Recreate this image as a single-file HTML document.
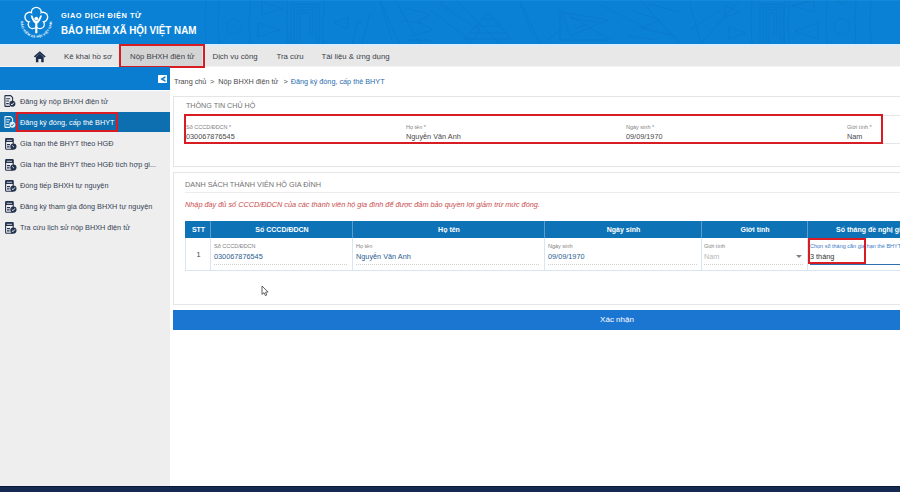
<!DOCTYPE html>
<html><head><meta charset="utf-8">
<style>
*{box-sizing:border-box;margin:0;padding:0}
html,body{width:900px;height:492px;overflow:hidden;background:#fff;font-family:"Liberation Sans",sans-serif;position:relative}
.abs{position:absolute}
#hdr{left:0;top:0;width:900px;height:44px;background:#0a81d5;overflow:hidden}
#nav{left:0;top:44px;width:900px;height:23px;background:#e8e8e8;border-top:2px solid #d8ecfa;border-bottom:1px solid #f4f4f4}
.nv{position:absolute;top:0;height:21px;line-height:21px;font-size:7.8px;color:#3a3f48;white-space:nowrap}
#side{left:0;top:67px;width:170px;height:419px;background:#eeeeee}
#sidehd{left:0;top:67px;width:170px;height:24px;background:#0a7dd0;border-bottom:1px solid #fafcff}
.si{position:absolute;left:0;width:170px;height:20px;font-size:7.3px;color:#354254;white-space:nowrap}
.si span{position:absolute;left:20px;top:0.7px;line-height:20px}
.si svg{position:absolute;left:4.6px;top:4.7px}
.red{position:absolute;border:2px solid #d71c24}
#foot{left:0;top:486px;width:900px;height:6px;background:#142a50;border-top:1px solid #0a1a36}
.panel{position:absolute;left:173px;width:740px;border:1px solid #e5e5e5;background:#fff}
.ptitle{position:absolute;font-size:7.15px;color:#727272;white-space:nowrap}
.lbl{position:absolute;font-size:5.5px;color:#828282;white-space:nowrap}
.val{position:absolute;font-size:7.3px;color:#4a4a4a;white-space:nowrap}
.th{position:absolute;top:221px;height:17px;line-height:17px;padding-left:1px;background:#0e73b6;color:#fff;font-weight:bold;font-size:7px;text-align:center;white-space:nowrap;border-left:1px solid #5b9ccc}
.dot{position:absolute;height:1px;background-image:linear-gradient(to right,#cfcfcf 50%,transparent 50%);background-size:2px 1px}
.td{position:absolute;top:238px;height:33px;border-left:1px solid #d9e6f1;border-bottom:1px solid #d9e6f1}
</style></head><body>
<div id="hdr" class="abs">
<svg class="abs" style="left:0;top:0" width="900" height="44" viewBox="0 0 900 44"><g stroke="#0a6fbd" stroke-width="0.7" fill="none" opacity="0.45">
<path d="M206 0 Q204 22 206 44 M219.5 0 Q217 22 219 44 M250.6 0 Q248 22 250 44 M287.5 0 Q286 22 288 44 M324.5 0 Q322 22 323 44"/>
<circle cx="234" cy="26.3" r="7.4"/>
<path d="M262 2 L282 8.5 L262 14.6 Z M258 23 L280 30 L258 37 Z M348 17.5 L334 23 L348 29 Z"/>
<path d="M291 44 V4 H319 V44 M294 44 V7 H316 V41 M297 44 V10 H313 V38 M300 44 V13 H310 V35 "/>
<path d="M352 44 L358 20 L362 22 M362 44 L370 14 M380 0 L400 44 M395 0 L420 44 M430 10 L470 40 M440 5 L480 30 L470 44 M455 0 L500 44 M520 0 L540 44 M560 10 L610 40 L560 40 Z M600 5 L650 30 M640 0 L680 44 M690 30 L720 10 M700 44 L740 0"/>
<path d="M725 6 L740 11.5 L725 17.5 Z M729 27 L746 33 L729 39 Z"/>
<path d="M760 44 V4 H783 V44 M763 44 V7 H780 V41 M766 44 V10 H777 V38 M769 44 V13 H774 V35 "/>
<path d="M752 0 Q750 22 752 44 M785 0 Q783 22 785 44 M789 0 Q787 22 789 44 M827 0 Q825 22 827 44 M856 0 Q854 22 856 44 M871 0 Q869 22 871 44"/>
<path d="M814 0 L791 6 L814 12 Z M818 23 L795 31 L818 39 Z"/>
<circle cx="841.7" cy="26.3" r="7.8"/>
<circle cx="841.7" cy="0" r="4"/>
<path d="M405 8 L430 14 L418 22 L433 30 L410 36 M402 20 L425 24 M408 40 L430 40 M464 39 L488 12 L511 39 Z M470 33 L505 33 M476 26 L499 26 M482 19 L494 19 M562 12 L608 20 L570 36 Z M570 18 L596 22 M575 28 L590 24 M630 10 L660 20 L640 28 L676 36 M628 36 L655 40 M650 4 L678 12 M380 2 L392 40 M520 4 L534 38 M690 4 L700 40 M440 2 L452 10 M545 42 L560 30"/>
</g></svg>
<svg class="abs" style="left:0;top:0" width="60" height="44" viewBox="0 0 60 44"><circle cx="36.30" cy="12.30" r="5.6" fill="#fff"/><circle cx="42.86" cy="17.07" r="5.5" fill="#fff"/><circle cx="40.00" cy="24.30" r="5.0" fill="#fff"/><circle cx="32.60" cy="24.30" r="5.0" fill="#fff"/><circle cx="29.74" cy="17.07" r="5.5" fill="#fff"/><circle cx="36.3" cy="19.2" r="6" fill="#fff"/><circle cx="36.30" cy="12.30" r="4.25" fill="#0a81d5"/><circle cx="42.86" cy="17.07" r="4.15" fill="#0a81d5"/><circle cx="40.00" cy="24.30" r="3.65" fill="#0a81d5"/><circle cx="32.60" cy="24.30" r="3.65" fill="#0a81d5"/><circle cx="29.74" cy="17.07" r="4.15" fill="#0a81d5"/><circle cx="36.3" cy="19.2" r="6.2" fill="#0a81d5"/><path d="M30.6 15.6 L32.4 15.4 Q34 20 36.3 21 Q38.6 20 40.2 15.4 L42 15.6 Q40.5 21.5 37.4 23.6 V33.2 H35.2 V23.6 Q32.1 21.5 30.6 15.6Z" fill="#fff"/><circle cx="36.3" cy="18.6" r="1.9" fill="#fff"/><path id="arc" d="M20.70 22.2 A15.6 15.6 0 0 0 51.90 22.2" fill="none"/><text font-family="Liberation Sans" font-weight="bold" font-size="3.3" fill="#fff" letter-spacing="0.2"><textPath href="#arc" startOffset="50%" text-anchor="middle">BẢO HIỂM XÃ HỘI VIỆT NAM</textPath></text></svg>
<div class="abs" style="left:61px;top:11.4px;font-size:7.4px;font-weight:bold;color:#fff;letter-spacing:0.55px;white-space:nowrap">GIAO DỊCH ĐIỆN TỬ</div>
<div class="abs" style="left:61px;top:23.6px;font-size:11.3px;font-weight:bold;color:#fff;white-space:nowrap;transform:scaleX(0.87);transform-origin:0 0">BẢO HIỂM XÃ HỘI VIỆT NAM</div>
</div>
<div class="abs" style="left:0;top:0;width:900px;height:1px;background:#1489d9"></div>
<div id="nav" class="abs">
  <svg class="abs" style="left:34px;top:4.7px" width="12" height="12" viewBox="0 0 12 12"><path d="M5.8 0.2 L-0.1 5.4 L1.1 6.5 L5.8 2.4 L10.5 6.5 L11.7 5.4 Z" fill="#1d2d4c"/><path d="M1.9 5.9 L5.8 2.6 L9.7 5.9 V11.3 H7.2 V8 H4.4 V11.3 H1.9 Z" fill="#1d2d4c"/></svg>
  <div class="nv" style="left:64px;top:-0.5px">Kê khai hồ sơ</div>
  <div class="abs" style="left:121px;top:0px;width:81px;height:20px;background:#d4d4d4"></div>
  <div class="nv" style="left:130px;top:-0.5px">Nộp BHXH điện tử</div>
  <div class="nv" style="left:212.5px;top:-0.5px">Dịch vụ công</div>
  <div class="nv" style="left:276.5px;top:-0.5px">Tra cứu</div>
  <div class="nv" style="left:321.5px;top:-0.5px">Tài liệu &amp; ứng dụng</div>
</div>
<div class="red" style="left:119px;top:44px;width:86px;height:24px"></div>

<div id="side" class="abs"></div>
<div id="sidehd" class="abs"><svg class="abs" style="left:158px;top:8px" width="9" height="8" viewBox="0 0 9 8"><rect width="9" height="8" rx="0.6" fill="#fff"/><path d="M7.4 0.9 L2.3 4 L7.4 7.1 V5.1 L5.1 4 L7.4 2.9 Z" fill="#0a7dd0"/></svg></div>
<div class="si" style="top:91px"><svg style="left:4.1px;top:4.3px" width="12" height="12" viewBox="0 0 12 12"><path d="M0.9 0.6 H6.6 L8.6 2.6 V6.4 M6 11.4 H0.9 Z M0.9 0.6 V11.4" fill="none" stroke="#24324f" stroke-width="1.1"/><path d="M2.2 3.8 H6.2 M2.2 6 H5.2 M2.2 8.6 H4.8" stroke="#24324f" stroke-width="1.1"/><circle cx="8.4" cy="8.7" r="3" fill="#24324f"/><path d="M6.9 8.8 L8 9.9 L9.9 7.6" fill="none" stroke="#eee" stroke-width="1"/></svg><span>Đăng ký nộp BHXH điện tử</span></div>
<div class="si" style="top:112px;background:#0e6fb0;color:#fff"><svg style="left:4.1px;top:4.3px" width="12" height="12" viewBox="0 0 12 12"><path d="M0.9 0.6 H6.6 L8.6 2.6 V6.4 M6 11.4 H0.9 Z M0.9 0.6 V11.4" fill="none" stroke="#e8f0f8" stroke-width="1.1"/><path d="M2.2 3.8 H6.2 M2.2 6 H5.2 M2.2 8.6 H4.8" stroke="#e8f0f8" stroke-width="1.1"/><circle cx="8.4" cy="8.7" r="3" fill="#e8f0f8"/><path d="M6.9 8.8 L8 9.9 L9.9 7.6" fill="none" stroke="#0e6fb0" stroke-width="1"/></svg><span>Đăng ký đóng, cấp thẻ BHYT</span></div>
<div class="si" style="top:133px"><svg width="12" height="12" viewBox="0 0 12 12"><rect x="0.6" y="0.6" width="7.6" height="10.6" rx="0.8" fill="none" stroke="#24324f" stroke-width="1.1"/><rect x="0.6" y="0.6" width="7.6" height="3.4" fill="#24324f"/><path d="M1.8 2.3 H7" stroke="#eee" stroke-width="0.8"/><path d="M2 6.6 H5 M2 8.9 H4.6" stroke="#24324f" stroke-width="1.1"/><circle cx="8.4" cy="8.5" r="3.1" fill="#24324f"/><path d="M7.2 7.4 L9 9.2" stroke="#eee" stroke-width="0.9"/></svg><span>Gia hạn thẻ BHYT theo HGĐ</span></div>
<div class="si" style="top:154px"><svg width="12" height="12" viewBox="0 0 12 12"><rect x="0.6" y="0.6" width="7.6" height="10.6" rx="0.8" fill="none" stroke="#24324f" stroke-width="1.1"/><rect x="0.6" y="0.6" width="7.6" height="3.4" fill="#24324f"/><path d="M1.8 2.3 H7" stroke="#eee" stroke-width="0.8"/><path d="M2 6.6 H5 M2 8.9 H4.6" stroke="#24324f" stroke-width="1.1"/><circle cx="8.4" cy="8.5" r="3.1" fill="#24324f"/><path d="M7.2 7.4 L9 9.2" stroke="#eee" stroke-width="0.9"/></svg><span>Gia hạn thẻ BHYT theo HGĐ tích hợp gi...</span></div>
<div class="si" style="top:175px"><svg width="12" height="12" viewBox="0 0 12 12"><rect x="0.6" y="0.6" width="7.6" height="10.6" rx="0.8" fill="none" stroke="#24324f" stroke-width="1.1"/><rect x="0.6" y="0.6" width="7.6" height="3.4" fill="#24324f"/><path d="M1.8 2.3 H7" stroke="#eee" stroke-width="0.8"/><path d="M2 6.6 H5 M2 8.9 H4.6" stroke="#24324f" stroke-width="1.1"/><circle cx="8.4" cy="8.5" r="3.1" fill="#24324f"/><path d="M6.9 8.6 L8 9.7 L9.9 7.4" fill="none" stroke="#eee" stroke-width="1"/></svg><span>Đóng tiếp BHXH tự nguyện</span></div>
<div class="si" style="top:196px"><svg width="12" height="12" viewBox="0 0 12 12"><rect x="0.6" y="0.6" width="7.6" height="10.6" rx="0.8" fill="none" stroke="#24324f" stroke-width="1.1"/><rect x="0.6" y="0.6" width="7.6" height="3.4" fill="#24324f"/><path d="M1.8 2.3 H7" stroke="#eee" stroke-width="0.8"/><path d="M2 6.6 H5 M2 8.9 H4.6" stroke="#24324f" stroke-width="1.1"/><circle cx="8.4" cy="8.5" r="3.1" fill="#24324f"/><path d="M6.9 8.6 L8 9.7 L9.9 7.4" fill="none" stroke="#eee" stroke-width="1"/></svg><span>Đăng ký tham gia đóng BHXH tự nguyện</span></div>
<div class="si" style="top:217px"><svg width="12" height="12" viewBox="0 0 12 12"><rect x="0.6" y="0.6" width="7.6" height="10.6" rx="0.8" fill="none" stroke="#24324f" stroke-width="1.1"/><rect x="0.6" y="0.6" width="7.6" height="3.4" fill="#24324f"/><path d="M1.8 2.3 H7" stroke="#eee" stroke-width="0.8"/><path d="M2 6.6 H5 M2 8.9 H4.6" stroke="#24324f" stroke-width="1.1"/><circle cx="8.4" cy="8.5" r="3.1" fill="#24324f"/><path d="M6.9 8.6 L8 9.7 L9.9 7.4" fill="none" stroke="#eee" stroke-width="1"/></svg><span>Tra cứu lịch sử nộp BHXH điện tử</span></div>
<div class="red" style="left:16px;top:112px;width:102px;height:20px"></div>

<!-- breadcrumb -->
<div class="abs" style="left:174px;top:76.7px;font-size:7.25px;color:#4a4a4a;white-space:nowrap">Trang chủ</div>
<div class="abs" style="left:210px;top:76.7px;font-size:7.25px;color:#4a4a4a;white-space:nowrap">&gt;</div>
<div class="abs" style="left:218.3px;top:76.7px;font-size:7.25px;color:#4a4a4a;white-space:nowrap">Nộp BHXH điện tử</div>
<div class="abs" style="left:283.5px;top:76.7px;font-size:7.25px;color:#4a4a4a;white-space:nowrap">&gt;</div>
<div class="abs" style="left:290.7px;top:76.7px;font-size:7.25px;color:#2a6db0;white-space:nowrap">Đăng ký đóng, cấp thẻ BHYT</div>

<!-- panel 1 -->
<div class="panel" style="top:96px;height:71px"></div>
<div class="ptitle" style="left:186px;top:102px">THÔNG TIN CHỦ HỘ</div>
<div class="abs" style="left:184px;top:115px;width:760px;height:29px;border:1px solid #e6e6e6"></div>
<div class="red" style="left:184px;top:114px;width:699px;height:30px"></div>
<div class="lbl" style="left:186px;top:124px">Số CCCD/ĐDCN *</div>
<div class="val" style="left:186px;top:132.4px">030067876545</div>
<div class="lbl" style="left:406px;top:124px">Họ tên *</div>
<div class="val" style="left:406px;top:132.4px">Nguyễn Văn Anh</div>
<div class="lbl" style="left:626px;top:124px">Ngày sinh *</div>
<div class="val" style="left:626px;top:132.4px">09/09/1970</div>
<div class="lbl" style="left:847px;top:124px">Giới tính *</div>
<div class="val" style="left:847px;top:132.4px">Nam</div>

<!-- panel 2 -->
<div class="panel" style="top:172px;height:133px"></div>
<div class="ptitle" style="left:185px;top:179.8px;font-size:7.3px">DANH SÁCH THÀNH VIÊN HỘ GIA ĐÌNH</div>
<div class="abs" style="left:185px;top:192px;width:720px;height:1px;background:#ececec"></div>
<div class="abs" style="left:185px;top:199.7px;font-size:7.3px;font-style:italic;color:#c94b4b;white-space:nowrap">Nhập đầy đủ số CCCD/ĐDCN của các thành viên hộ gia đình để được đảm bảo quyền lợi giảm trừ mức đóng.</div>

<div class="th" style="left:185px;width:25px;border-left-color:#0e73b6">STT</div>
<div class="th" style="left:210px;width:142px">Số CCCD/ĐDCN</div>
<div class="th" style="left:352px;width:192px">Họ tên</div>
<div class="th" style="left:544px;width:157px">Ngày sinh</div>
<div class="th" style="left:701px;width:106px">Giới tính</div>
<div class="th" style="left:807px;width:200px;text-align:left;padding-left:28px">Số tháng đề nghị gia hạn</div>


<!-- table body -->
<div class="td" style="left:185px;width:25px"><div class="val" style="left:10.5px;top:11.5px;color:#444">1</div></div>
<div class="td" style="left:210px;width:142px"></div>
<div class="td" style="left:352px;width:192px"></div>
<div class="td" style="left:544px;width:157px"></div>
<div class="td" style="left:701px;width:106px"></div>
<div class="td" style="left:807px;width:200px"></div>
<div class="lbl" style="left:214px;top:243px">Số CCCD/ĐDCN</div>
<div class="val" style="left:214px;top:251.7px;color:#2a5d92">030067876545</div>
<div class="dot" style="left:214px;top:264px;width:134px"></div>
<div class="lbl" style="left:356px;top:243px">Họ tên</div>
<div class="val" style="left:356px;top:251.7px;color:#2a5d92">Nguyễn Văn Anh</div>
<div class="dot" style="left:356px;top:264px;width:184px"></div>
<div class="lbl" style="left:548px;top:243px">Ngày sinh</div>
<div class="val" style="left:548px;top:251.7px;color:#2a5d92">09/09/1970</div>
<div class="dot" style="left:548px;top:264px;width:149px"></div>
<div class="lbl" style="left:704px;top:243px">Giới tính</div>
<div class="val" style="left:704px;top:251.7px;color:#b8b8b8">Nam</div>
<div class="abs" style="left:796px;top:255px;width:0;height:0;border-left:3px solid transparent;border-right:3px solid transparent;border-top:3px solid #808080"></div>
<div class="dot" style="left:704px;top:264px;width:99px"></div>
<div class="lbl" style="left:810px;top:243px;color:#3b7bc6">Chọn số tháng cần gia hạn thẻ BHYT</div>
<div class="val" style="left:810px;top:251.7px;color:#333">3 tháng</div>
<div class="abs" style="left:810px;top:264px;width:90px;height:1px;background:#2f6fb8"></div>
<div class="red" style="left:808px;top:238px;width:58px;height:26px"></div>

<!-- button -->
<div class="abs" style="left:173px;top:310px;width:888px;height:20px;background:#1b76d2;color:#fff;font-size:8px;line-height:20px;text-align:center;padding-left:0">Xác nhận</div>

<svg class="abs" style="left:261px;top:285px" width="10" height="13" viewBox="0 0 10 13"><path d="M1 1 V9.4 L3 7.7 L4.4 10.6 L5.8 10 L4.5 7.2 L7.1 7 Z" fill="#fff" stroke="#3a3a3a" stroke-width="0.8" stroke-linejoin="round"/></svg>
<div id="foot" class="abs"></div>
</body></html>
